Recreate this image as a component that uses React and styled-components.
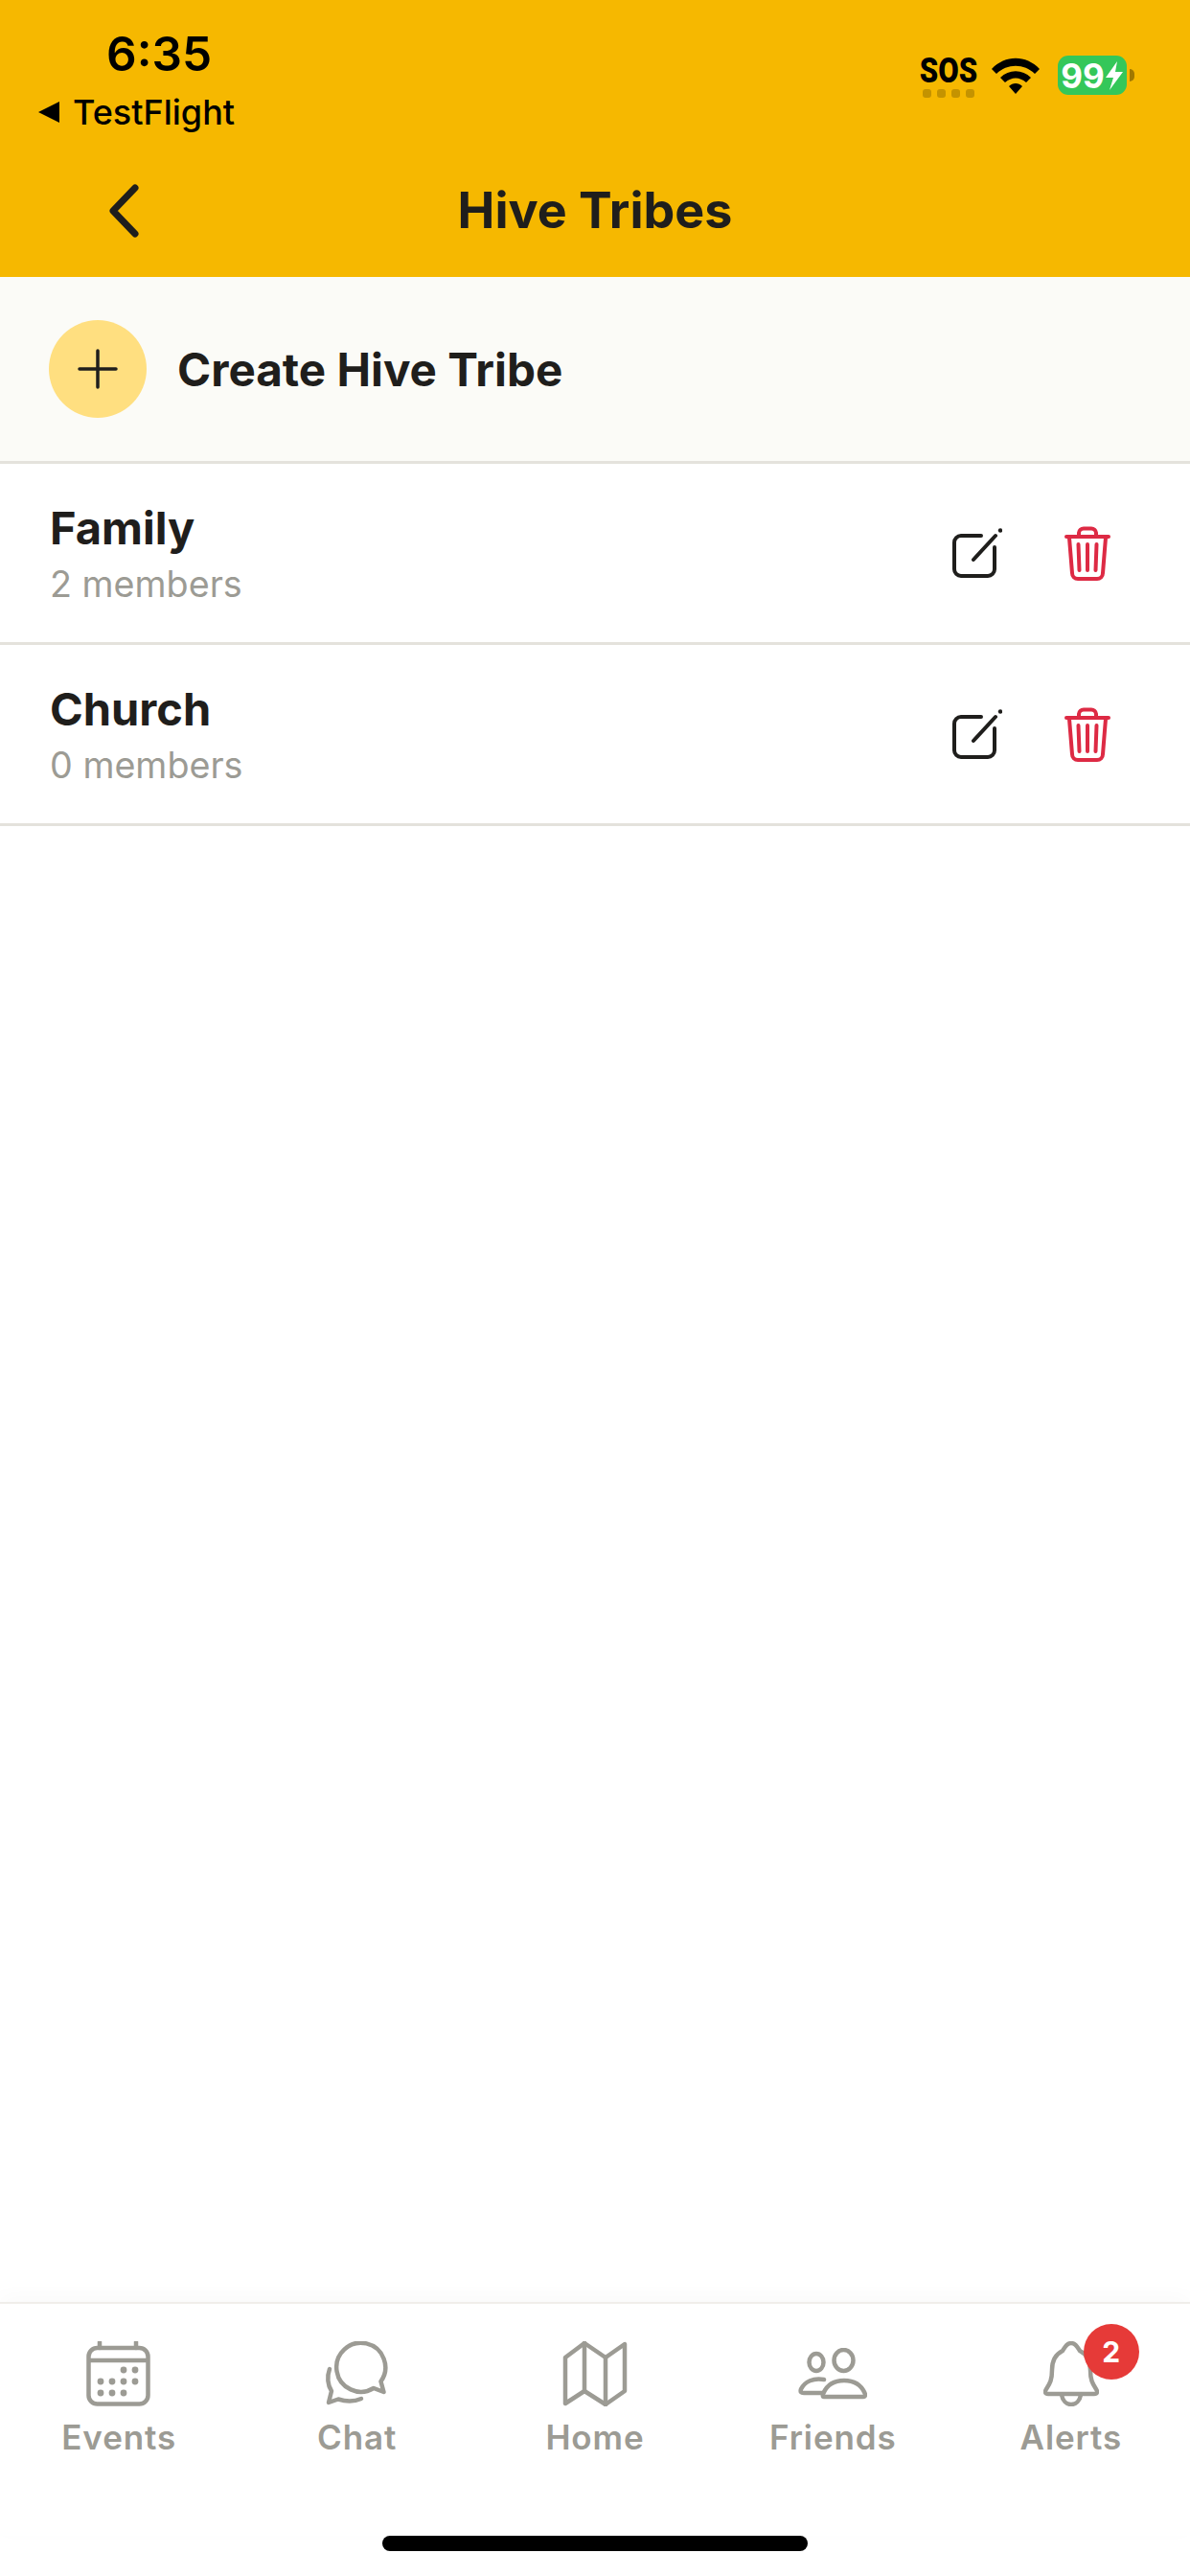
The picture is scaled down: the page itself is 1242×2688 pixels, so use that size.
import React from "react";
import styled, { createGlobalStyle } from "styled-components";

const tribes = [
  { name: "Family", members: 2 },
  { name: "Church", members: 0 },
];

const GlobalStyle = createGlobalStyle`
  html, body {
    margin: 0;
    padding: 0;
    background: #fff;
  }
  * {
    box-sizing: border-box;
  }
`;

function BackIcon() {
  return (
    <svg width="32" height="56" viewBox="0 0 32 56" fill="none">
      <path d="M28 4 L5 28 L28 52" stroke="#1f1e1c" strokeWidth="7" strokeLinecap="round" strokeLinejoin="round" />
    </svg>
  );
}

function WifiIcon() {
  return (
    <svg width="52" height="40" viewBox="0 0 52 40">
      <path d="M1 14 C15 -1 37 -1 51 14 L46 19 C35 8 17 8 6 19 Z" fill="#000" />
      <path d="M10 23 C19 14 33 14 42 23 L37 28 C30 22 22 22 15 28 Z" fill="#000" />
      <path d="M19 32 C23 28 29 28 33 32 L26 40 Z" fill="#000" />
    </svg>
  );
}

function BoltIcon() {
  return (
    <svg width="20" height="30" viewBox="0 0 20 30">
      <path d="M13 0 L1 17 H9 L5 30 L19 11 H11 Z" fill="#fff" />
    </svg>
  );
}

function PlusIcon() {
  return (
    <svg width="42" height="42" viewBox="0 0 42 42" fill="none">
      <path d="M21 2 V40 M2 21 H40" stroke="#1f1e1c" strokeWidth="3.5" strokeLinecap="round" />
    </svg>
  );
}

function EditIcon() {
  return (
    <svg width="52" height="52" viewBox="0 0 52 52" fill="none" stroke="#1f1e1c">
      <path d="M30 8 H9 A7 7 0 0 0 2 15 V43 A7 7 0 0 0 9 50 H37 A7 7 0 0 0 44 43 V20" strokeWidth="4" strokeLinecap="round" />
      <path d="M22 33 L45 8" strokeWidth="4" strokeLinecap="round" />
      <circle cx="50" cy="2.5" r="2.2" fill="#1f1e1c" stroke="none" />
    </svg>
  );
}

function TrashIcon() {
  return (
    <svg width="48" height="57" viewBox="0 0 48 57" fill="none" stroke="#dd2a44" strokeWidth="4" strokeLinecap="round" strokeLinejoin="round">
      <path d="M2 11 H46" />
      <path d="M15 10 V7 A5 5 0 0 1 20 2.5 H28 A5 5 0 0 1 33 7 V10" />
      <path d="M5 12 L8 49 A6 6 0 0 0 14 55 H34 A6 6 0 0 0 40 49 L43 12" />
      <path d="M14.5 19 L15.5 46 M24 19 V46 M33.5 19 L32.5 46" />
    </svg>
  );
}

function CalendarIcon() {
  const dots = [
    [39, 30], [51, 30],
    [15, 42], [27, 42], [39, 42], [51, 42],
    [15, 54], [27, 54], [39, 54],
  ];
  return (
    <svg width="68" height="68" viewBox="0 0 68 68" fill="none" stroke="#9c9b94" strokeWidth="4.5">
      <rect x="2.5" y="7" width="62" height="58.5" rx="9" />
      <path d="M2.5 20 H64.5" />
      <path d="M14 1 V7 M52 1 V7" strokeLinecap="round" />
      {dots.map(([cx, cy]) => (
        <circle key={`${cx}-${cy}`} cx={cx} cy={cy} r="3.4" fill="#9c9b94" stroke="none" />
      ))}
    </svg>
  );
}

function ChatIcon() {
  return (
    <svg width="68" height="68" viewBox="0 0 68 68" fill="none" stroke="#9c9b94" strokeWidth="4.5" strokeLinecap="round" strokeLinejoin="round">
      <path d="M51 49 A25.5 25.5 0 1 1 58.5 42 L61.5 53 Z" />
      <path d="M5 29 C2 37 3 46 7 52 L4 64 L14 60.5 C22 63 31 63 38 60" />
    </svg>
  );
}

function MapIcon() {
  return (
    <svg width="68" height="68" viewBox="0 0 68 68" fill="none" stroke="#9c9b94" strokeWidth="4.5" strokeLinecap="round" strokeLinejoin="round">
      <path d="M3 17 L23 2 L45 17 L65 3 V52 L45 66 L23 52 L3 65 Z" />
      <path d="M23 2 V52 M45 17 V66" />
    </svg>
  );
}

function FriendsIcon() {
  return (
    <svg width="72" height="54" viewBox="0 0 72 54" fill="none" stroke="#9c9b94" strokeWidth="4.5" strokeLinecap="round" strokeLinejoin="round">
      <ellipse cx="19" cy="15" rx="7.5" ry="9" />
      <ellipse cx="47.5" cy="13" rx="10" ry="11" />
      <path d="M27 51 H68 C70 51 70.5 49 69.5 47 C65 37 57 34 48 34 C39 34 31 37 26.5 47 C25.5 49 25.5 51 27 51 Z" />
      <path d="M27 33 C16 31 7 35 3 43 C2 46 3 47 6 47 H26" />
    </svg>
  );
}

function BellIcon() {
  return (
    <svg width="58" height="68" viewBox="0 0 58 68" fill="none" stroke="#9c9b94" strokeWidth="4.5" strokeLinecap="round" strokeLinejoin="round">
      <path d="M29 2 C24 2 22 7 20 10 C12 14 9 22 9 30 C9 40 7 44 3 50 C1 53 2 55 5 55 H53 C56 55 57 53 55 50 C51 44 49 40 49 30 C49 22 46 14 38 10 C36 7 34 2 29 2 Z" />
      <path d="M19 56 C20 62 24 66 29 66 C34 66 38 62 39 56" />
    </svg>
  );
}

const tabs = [
  { label: "Events", icon: <CalendarIcon /> },
  { label: "Chat", icon: <ChatIcon /> },
  { label: "Home", icon: <MapIcon /> },
  { label: "Friends", icon: <FriendsIcon /> },
  { label: "Alerts", icon: <BellIcon />, badge: 2 },
];

export default function App() {
  return (
    <Page>
      <GlobalStyle />
      <Header>
        <StatusBar>
          <StatusLeft>
            <Clock>6:35</Clock>
            <BackLink>
              <BackArrow />
              TestFlight
            </BackLink>
          </StatusLeft>
          <StatusRight>
            <Sos>
              <SosText>SOS</SosText>
              <SignalDots>
                <i />
                <i />
                <i />
                <i />
              </SignalDots>
            </Sos>
            <WifiIcon />
            <Battery>
              <BatteryBody>
                99
                <BoltIcon />
              </BatteryBody>
              <BatteryCap />
            </Battery>
          </StatusRight>
        </StatusBar>
        <NavBar>
          <BackButton>
            <BackIcon />
          </BackButton>
          <Title>Hive Tribes</Title>
        </NavBar>
      </Header>

      <CreateRow>
        <CreateCircle>
          <PlusIcon />
        </CreateCircle>
        <CreateLabel>Create Hive Tribe</CreateLabel>
      </CreateRow>

      <TribeList>
        {tribes.map((tribe) => (
          <TribeRow key={tribe.name}>
            <div>
              <TribeName>{tribe.name}</TribeName>
              <TribeMembers>{tribe.members} members</TribeMembers>
            </div>
            <Actions>
              <EditIcon />
              <TrashIcon />
            </Actions>
          </TribeRow>
        ))}
      </TribeList>

      <TabBar>
        {tabs.map((tab) => (
          <Tab key={tab.label}>
            <TabIcon>
              {tab.icon}
              {tab.badge && <Badge>{tab.badge}</Badge>}
            </TabIcon>
            <TabLabel>{tab.label}</TabLabel>
          </Tab>
        ))}
      </TabBar>
      <HomeArea>
        <HomeIndicator />
      </HomeArea>
    </Page>
  );
}

const Page = styled.div`
  width: 1242px;
  height: 2688px;
  display: flex;
  flex-direction: column;
  background: #fff;
  font-family: Inter, "Liberation Sans", sans-serif;
  color: #1f1e1c;
  overflow: hidden;
`;

const Header = styled.header`
  height: 289px;
  flex: none;
  background: #f6b800;
  display: flex;
  flex-direction: column;
`;

const StatusBar = styled.div`
  height: 151px;
  display: flex;
  justify-content: space-between;
  padding: 26px 58px 0 40px;
  color: #000;
`;

const StatusLeft = styled.div`
  display: flex;
  flex-direction: column;
`;

const Clock = styled.div`
  font-size: 49.5px;
  line-height: 60px;
  font-weight: 600;
  margin-left: 71px;
`;

const BackLink = styled.div`
  display: flex;
  align-items: center;
  gap: 14px;
  font-size: 36px;
  line-height: 44px;
  font-weight: 500;
  margin-top: 9px;
`;

const BackArrow = styled.span`
  width: 0;
  height: 0;
  border-style: solid;
  border-width: 11px 22px 11px 0;
  border-color: transparent #000 transparent transparent;
`;

const StatusRight = styled.div`
  display: flex;
  align-items: flex-start;
  padding-top: 32px;
  gap: 14px;
`;

const Sos = styled.div`
  width: 60px;
  display: flex;
  flex-direction: column;
  align-items: center;
`;

const SosText = styled.span`
  font-family: Roboto, sans-serif;
  font-size: 37px;
  line-height: 32px;
  font-weight: 900;
  transform: scaleX(0.84);
`;

const SignalDots = styled.div`
  display: flex;
  gap: 6px;
  margin-top: 3px;

  i {
    width: 9px;
    height: 9px;
    border-radius: 3px;
    background: rgba(0, 0, 0, 0.2);
  }
`;

const Battery = styled.div`
  display: flex;
  align-items: center;
  gap: 3px;
  margin-left: 4px;
`;

const BatteryBody = styled.div`
  width: 72px;
  height: 41px;
  border-radius: 11px;
  background: #34c759;
  color: #fff;
  font-size: 35px;
  font-weight: 700;
  display: flex;
  align-items: center;
  justify-content: center;
  gap: 0;
`;

const BatteryCap = styled.span`
  width: 5px;
  height: 13px;
  border-radius: 0 5px 5px 0;
  background: rgba(0, 0, 0, 0.35);
`;

const NavBar = styled.nav`
  flex: 1;
  display: grid;
  grid-template-columns: 1fr auto 1fr;
  align-items: center;
`;

const BackButton = styled.div`
  padding-left: 113px;
  display: flex;
`;

const Title = styled.h1`
  margin: 0;
  font-size: 52px;
  line-height: 60px;
  font-weight: 700;
  color: #1f1e1c;
`;

const CreateRow = styled.div`
  height: 195px;
  flex: none;
  display: flex;
  align-items: center;
  gap: 33px;
  padding-left: 51px;
  background: #fbfbf7;
  border-bottom: 3px solid #e4e2dc;
`;

const CreateCircle = styled.div`
  width: 102px;
  height: 102px;
  border-radius: 50%;
  background: #ffdf80;
  display: flex;
  align-items: center;
  justify-content: center;
`;

const CreateLabel = styled.span`
  font-size: 47.6px;
  font-weight: 700;
  margin-left: -1px;
`;

const TribeList = styled.div`
  flex: 1;
`;

const TribeRow = styled.div`
  height: 189px;
  display: flex;
  align-items: center;
  justify-content: space-between;
  padding: 0 83px 0 52px;
  border-bottom: 3px solid #e4e2dc;
`;

const TribeName = styled.div`
  font-size: 47px;
  line-height: 56px;
  font-weight: 700;
`;

const TribeMembers = styled.div`
  font-size: 37.7px;
  line-height: 46px;
  margin-top: 7px;
  color: #9c9b94;
`;

const Actions = styled.div`
  display: flex;
  align-items: center;
  gap: 65px;
`;

const TabBar = styled.nav`
  flex: none;
  height: 244px;
  display: grid;
  grid-template-columns: repeat(5, 1fr);
  padding-top: 39px;
  border-top: 2px solid #f0eeea;
  box-shadow: 0 -6px 20px rgba(0, 0, 0, 0.025);
`;

const Tab = styled.div`
  display: flex;
  flex-direction: column;
  align-items: center;
`;

const TabIcon = styled.div`
  position: relative;
  height: 68px;
  display: flex;
  align-items: center;
  justify-content: center;
`;

const Badge = styled.span`
  position: absolute;
  top: -18px;
  right: -42px;
  width: 58px;
  height: 58px;
  border-radius: 50%;
  background: #e63a38;
  color: #fff;
  font-size: 30px;
  font-weight: 700;
  display: flex;
  align-items: center;
  justify-content: center;
`;

const TabLabel = styled.span`
  margin-top: 12px;
  font-size: 35px;
  line-height: 40px;
  font-weight: 600;
  color: #9c9b94;
  letter-spacing: 0.9px;
`;

const HomeArea = styled.div`
  flex: none;
  height: 42px;
  display: flex;
  justify-content: center;
`;

const HomeIndicator = styled.div`
  width: 444px;
  height: 16px;
  border-radius: 8px;
  background: #000;
`;
